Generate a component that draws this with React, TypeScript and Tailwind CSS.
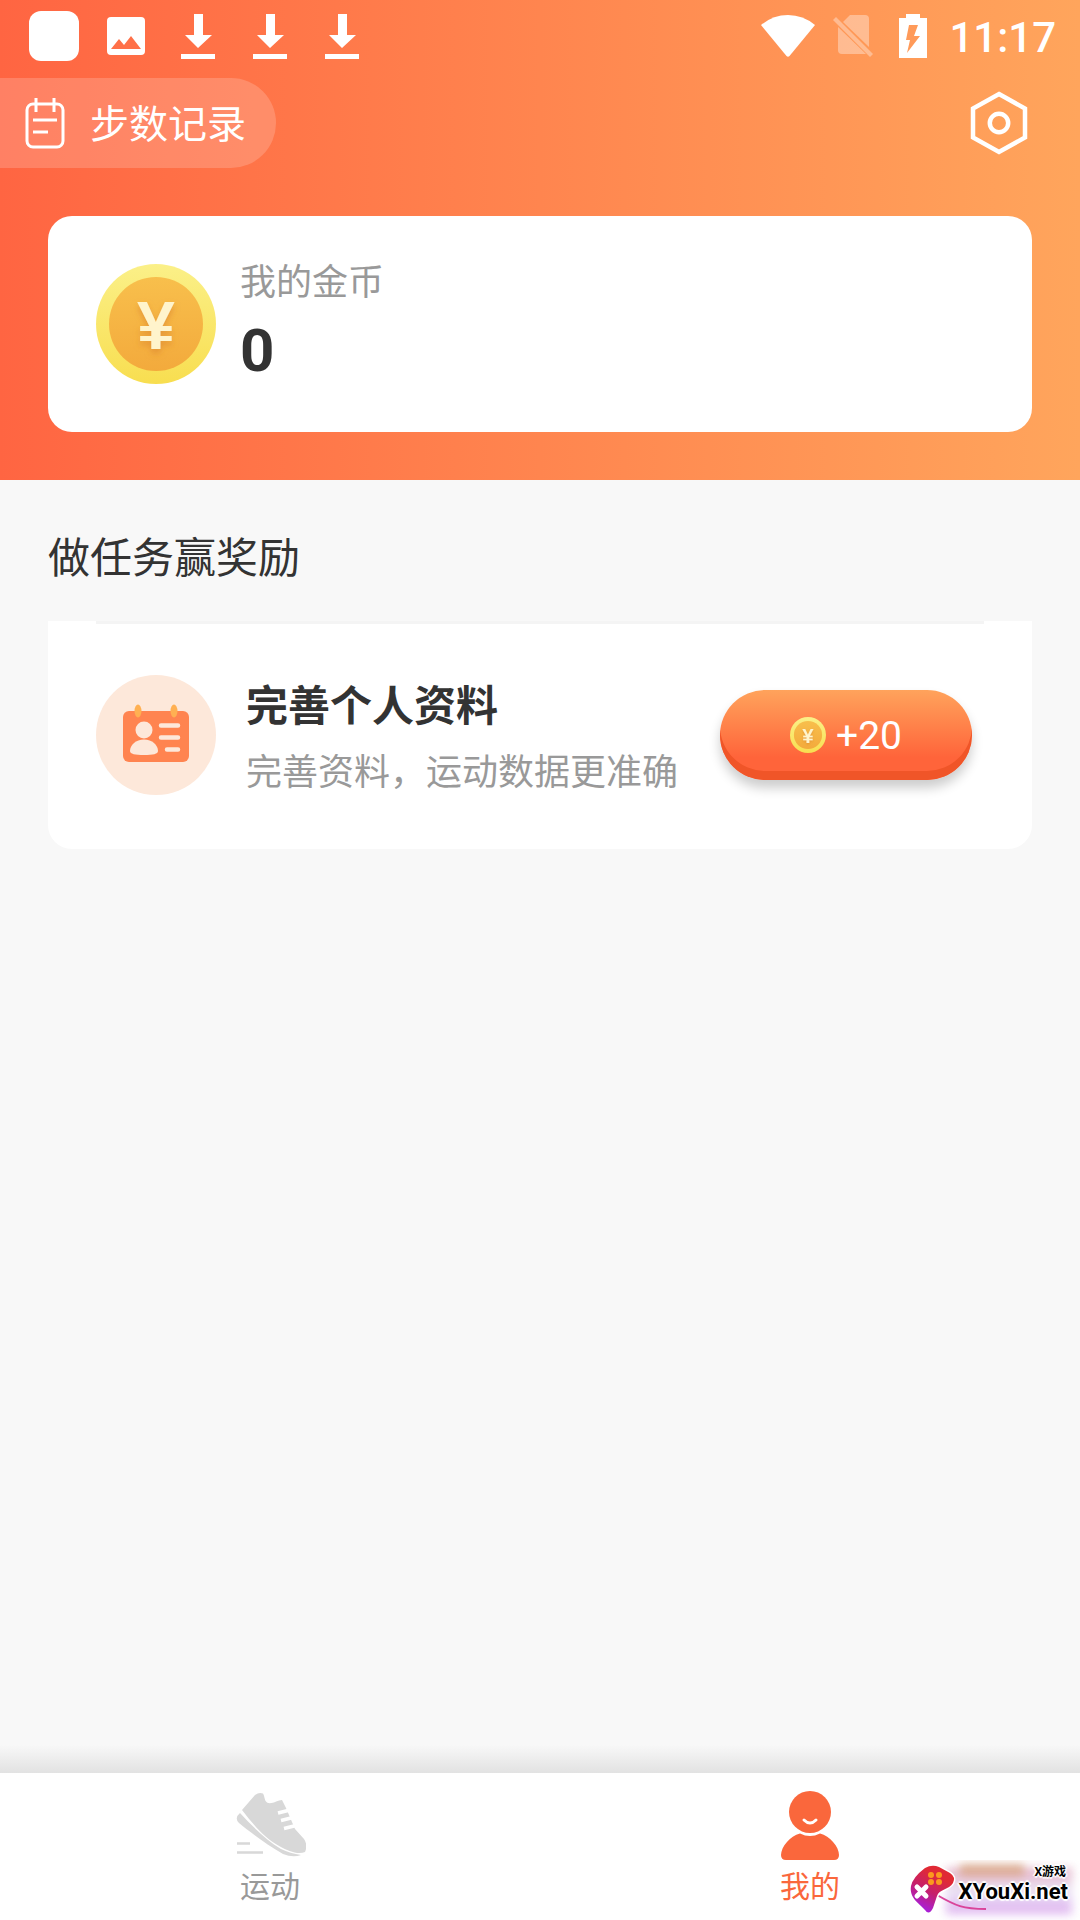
import type { ReactNode } from "react";

const DownloadIcon = () => (
  <svg className="h-12 w-9" viewBox="0 0 36 48" fill="#fff" aria-hidden="true">
    <path d="M14 2h9v21h9L18 36 5 23h9z" />
    <rect x="1" y="42" width="34" height="5" />
  </svg>
);

const StatusSlot = ({ children }: { children: ReactNode }) => (
  <div className="flex w-[72px] items-center justify-center">{children}</div>
);

const StatusBar = () => (
  <div className="flex h-[72px] items-center justify-between pl-[18px] pr-6">
    <div className="flex">
      <StatusSlot>
        <div className="size-[50px] rounded-xl bg-white" />
      </StatusSlot>
      <StatusSlot>
        <svg className="size-[38px]" viewBox="0 0 38 38" aria-hidden="true">
          <rect width="38" height="38" rx="4" fill="#fff" />
          <path d="M4 32l8-10 5 6 7-9 10 13z" fill="#ff7048" />
        </svg>
      </StatusSlot>
      <StatusSlot>
        <DownloadIcon />
      </StatusSlot>
      <StatusSlot>
        <DownloadIcon />
      </StatusSlot>
      <StatusSlot>
        <DownloadIcon />
      </StatusSlot>
    </div>
    <div className="flex items-center">
      <svg className="mr-[18px] h-[42px] w-[54px]" viewBox="0 0 54 42" fill="#fff" aria-hidden="true">
        <path d="M0 10Q12 0 27 0t27 10L28.500 41q-1.500 1.500-3 0z" />
      </svg>
      <svg className="mr-[26px] h-[42px] w-10" viewBox="0 0 40 42" fill="#fff" opacity="0.35" aria-hidden="true">
        <path d="M17 0h15q4 0 4 4v28L10 7z" />
        <path d="M5 12l28 27H9q-4 0-4-4z" />
        <path d="M0 5l3-3 37 37-3 3z" />
      </svg>
      <svg className="mr-[22px] h-11 w-7" viewBox="0 0 28 44" aria-hidden="true">
        <path d="M7 0h14v4h7v40H0V4h7z" fill="#fff" />
        <path d="M10 11h9l-4 11h6L8 39l3-13H7z" fill="#ff9a59" />
      </svg>
      <span className="pt-1 text-[42px] leading-none font-medium text-white">11:17</span>
    </div>
  </div>
);

const Coin = ({ className }: { className: string }) => (
  <svg className={className} viewBox="0 0 120 120" aria-hidden="true">
    <defs>
      <linearGradient id="coinRim" x1="0" y1="0" x2="0" y2="1">
        <stop offset="0" stopColor="#fbf088" />
        <stop offset="1" stopColor="#f8de50" />
      </linearGradient>
      <linearGradient id="coinFace" x1="0" y1="0" x2="0" y2="1">
        <stop offset="0" stopColor="#f8bf4c" />
        <stop offset="1" stopColor="#f3aa3c" />
      </linearGradient>
      <filter id="coinShadow" x="-30%" y="-30%" width="160%" height="160%">
        <feDropShadow dx="0" dy="4" stdDeviation="3" floodColor="#d9822b" floodOpacity="0.6" />
      </filter>
    </defs>
    <circle cx="60" cy="60" r="60" fill="url(#coinRim)" />
    <circle cx="60" cy="60" r="47" fill="url(#coinFace)" />
    <text
      x="60"
      y="85"
      textAnchor="middle"
      fontFamily="Liberation Sans, sans-serif"
      fontSize="68"
      fontWeight="700"
      fill="#fff4cc"
      filter="url(#coinShadow)"
    >
      ¥
    </text>
  </svg>
);

const ProfileCardIcon = () => (
  <svg className="size-[120px] shrink-0" viewBox="0 0 120 120" aria-hidden="true">
    <circle cx="60" cy="60" r="60" fill="#fde8da" />
    <rect x="27" y="36" width="66" height="51" rx="6" fill="#ff8450" />
    <ellipse cx="42" cy="36" rx="3.500" ry="6.500" fill="#ffb052" />
    <ellipse cx="78" cy="36" rx="3.500" ry="6.500" fill="#ffb052" />
    <circle cx="48" cy="55" r="8.500" fill="#fde8da" />
    <path d="M34 76c0-6 6-11.500 14-11.500S62 70 62 76c0 3-5 4-14 4s-14-1-14-4z" fill="#fde8da" />
    <path d="M65 50.500h17M65 62.500h17M71 74.500h11" stroke="#fde8da" strokeWidth="4.500" strokeLinecap="round" />
  </svg>
);

const Header = () => (
  <header className="bg-linear-to-r/srgb from-[#ff6542] to-[#ffa55c] pb-12">
    <StatusBar />
    <div className="mt-1.5 flex h-[90px] items-center justify-between pr-[51px]">
      <button className="flex h-full w-[276px] items-center gap-6 rounded-r-full bg-white/18 pl-6 text-[39px] text-white">
        <svg className="h-[54px] w-[42px]" viewBox="0 0 42 54" fill="none" stroke="#fff" strokeWidth="3" aria-hidden="true">
          <rect x="3" y="8" width="36" height="43" rx="6" />
          <path d="M12 2v14M30 2v14M9 24h24M9 36h15" />
        </svg>
        <span className="pt-1">步数记录</span>
      </button>
      <button aria-label="设置">
        <svg className="h-[66px] w-[60px]" viewBox="0 0 60 66" fill="none" stroke="#fff" strokeWidth="4.500" aria-hidden="true">
          <path d="M30 4l26 14.500v29L30 62 4 47.500v-29z" />
          <circle cx="30" cy="33" r="9.200" />
        </svg>
      </button>
    </div>
    <section className="mx-12 mt-12 flex h-[216px] items-center gap-6 rounded-3xl bg-white px-12">
      <Coin className="size-[120px] shrink-0" />
      <div className="pb-2">
        <p className="mb-0.5 text-[36px] leading-[60px] text-[#999]">我的金币</p>
        <p className="text-[60px] leading-[72px] font-bold text-[#333]">0</p>
      </div>
    </section>
  </header>
);

const TaskCard = () => (
  <article className="rounded-b-3xl bg-white px-12 pb-[45px]">
    <div className="h-[3px] bg-[#f4f4f4]" />
    <div className="flex items-center pt-[42px] pr-3">
      <ProfileCardIcon />
      <div className="ml-[30px] flex-1 pt-[11px] pb-[3px]">
        <h3 className="mb-2 text-[42px] leading-[60px] font-bold text-[#333]">完善个人资料</h3>
        <p className="text-[36px] leading-[56px] text-[#999]">完善资料，运动数据更准确</p>
      </div>
      <button className="flex h-[90px] w-[252px] items-center justify-center gap-2.5 rounded-full bg-linear-to-b/srgb from-[#ffa35c] to-[#ff643a] to-75% text-[39px] text-white shadow-[inset_0_-9px_0_#f05528,0_8px_12px_rgba(0,0,0,0.2)]">
        <Coin className="size-9" />
        <span className="pt-0.5">+20</span>
      </button>
    </div>
  </article>
);

const ShoeIcon = () => (
  <svg className="h-[72px] w-[72px]" viewBox="0 0 72 72" aria-hidden="true">
    <g fill="#d8d8d8">
      <path d="M8 20L21 5q4-3 8-1.500c2 3 1 8 5 9.500 5 1 10-3 14-3l4 8 9 21 9 10q4 6 1 13c-7 3-17-1-25-5.500C30 48 19 34 8 20z" />
      <path d="M6 23q-6 5-1 10c10 8 26 21 44 31q10 4 18 1c-7-1-14-3-20-6C32 50 18 36 6 23z" />
    </g>
    <path d="M44 23l12-3M47 30.500l12-3M50 38.500l12-3" stroke="#fff" strokeWidth="3.500" />
    <path d="M3 53.500h13M3 62.500h26" stroke="#d8d8d8" strokeWidth="2.500" />
  </svg>
);

const PersonIcon = () => (
  <svg className="size-[72px]" viewBox="0 0 72 72" aria-hidden="true">
    <circle cx="36" cy="22" r="21" fill="#fa673c" />
    <path d="M30 30q6 6 12 0" fill="none" stroke="#fff" strokeWidth="3" strokeLinecap="round" />
    <path d="M26 43.500q10 5 20 0C56 46 65 57 65 65q0 5-5 5H12q-5 0-5-5c0-8 9-19 19-21.500z" fill="#fa673c" />
  </svg>
);

const TabBar = () => (
  <nav className="mt-auto">
    <div className="h-7 bg-gradient-to-b from-[#f8f8f8] to-[#e2e2e2]" />
    <div className="flex h-[147px] bg-white text-[30px] leading-[50px]">
      <button className="flex flex-1 flex-col items-center pt-[17px] text-[#999]">
        <ShoeIcon />
        运动
      </button>
      <button className="flex flex-1 flex-col items-center pt-[17px] text-[#fa673c]" aria-current="page">
        <PersonIcon />
        我的
      </button>
    </div>
  </nav>
);

const SiteBadge = () => (
  <div className="absolute right-0 bottom-0 h-[60px] w-[172px] overflow-hidden">
    <div className="absolute top-2 right-2 h-[46px] w-[126px] bg-linear-to-b/srgb from-[#d98fae] via-[#e4dcf2] to-[#cf8ce8] opacity-70 blur-[5px]" />
    <div className="absolute top-1 right-14 h-3 w-16 bg-[#d29a68] opacity-60 blur-[4px]" />
    <svg className="absolute top-0 left-0 h-[60px] w-[172px]" viewBox="0 0 172 60" aria-hidden="true">
      <defs>
        <linearGradient id="pad" x1="0.700" y1="0" x2="0.200" y2="1">
          <stop offset="0.200" stopColor="#e02a35" />
          <stop offset="0.550" stopColor="#c51f6c" />
          <stop offset="0.900" stopColor="#a91fd5" />
        </linearGradient>
      </defs>
      <path d="M29 35C48 46 55 49 78 49" fill="none" stroke="#d9449a" strokeWidth="2" />
      <path
        d="M17 8Q24 4 31 7l11 6q6 4 3 10c-4 7-14 6-16 13l-4 12q-4 8-8 2C11 43 1 38 3 26Q5 17 17 8z"
        fill="url(#pad)"
        stroke="#fff"
        strokeWidth="3"
        paintOrder="stroke"
      />
      <g fill="#fb9a1e">
        <circle cx="23" cy="15" r="3" />
        <circle cx="31" cy="15" r="3" />
        <circle cx="23" cy="22" r="3" />
        <circle cx="31" cy="22" r="3" />
      </g>
      <path d="M9 27l9 9M18 27l-9 9" stroke="#fff" strokeWidth="5" strokeLinecap="round" />
    </svg>
    <div className="absolute right-3 bottom-4 flex flex-col items-end font-bold text-black [text-shadow:0_0_2px_#fff,2px_0_1px_#fff,-2px_0_1px_#fff,0_2px_1px_#fff,0_-2px_1px_#fff]">
      <span className="pr-0.5 text-[12px] leading-[16px]">X游戏</span>
      <span className="text-[22px] leading-6">XYouXi.net</span>
    </div>
  </div>
);

export default function App() {
  return (
    <div
      lang="zh-CN"
      className="relative flex min-h-screen flex-col bg-[#f8f8f8] font-[Roboto,'Noto_Sans_CJK_SC',sans-serif]"
    >
      <Header />
      <main className="px-12 pt-[46px]">
        <h2 className="mb-[29px] text-[42px] leading-[66px] text-[#333]">做任务赢奖励</h2>
        <TaskCard />
      </main>
      <TabBar />
      <SiteBadge />
    </div>
  );
}
